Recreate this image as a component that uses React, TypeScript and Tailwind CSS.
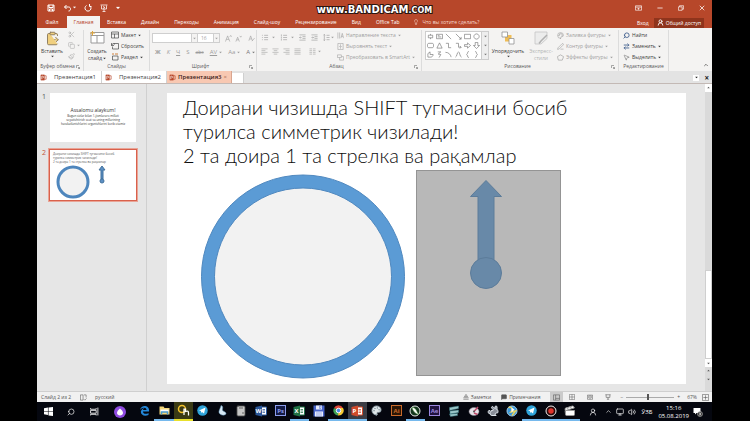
import type { ReactNode } from "react";
import clsx from "clsx";
import {
  ArrowRightLeft,
  Calculator,
  ChevronUp,
  Clapperboard,
  ClipboardPaste,
  Copy,
  Lightbulb,
  MessageSquare,
  MousePointer2,
  Palette,
  Paintbrush,
  PenLine,
  Rabbit,
  Scissors,
  Search,
  UserRound,
  Volume2,
  Monitor,
} from "lucide-react";

interface SvgProps {
  className?: string;
  box?: string;
  children: ReactNode;
}

const Svg = ({ className = "size-2", box = "0 0 16 16", children }: SvgProps) => (
  <svg viewBox={box} className={clsx("shrink-0", className)} fill="none" stroke="currentColor" aria-hidden="true">
    {children}
  </svg>
);

/* ---------- title bar ---------- */

const TitleBar = () => (
  <header className="relative flex h-[15px] items-center justify-between pl-[10px] pr-[7px] text-white">
    <div className="flex items-center gap-2">
      <button aria-label="Сохранить">
        <Svg>
          <path d="M2 2h12v12H2zM4 2v5h8V2M5 14v-4h6v4" strokeWidth="2" />
        </Svg>
      </button>
      <button aria-label="Отменить" className="flex items-center gap-px">
        <Svg className="h-2 w-[9px]">
          <path d="M6 2 2 6l4 4M2 6h8c3 0 4 2 4 4s-1 4-4 4" strokeWidth="2" />
        </Svg>
        <Svg className="size-[3px]">
          <path d="M1 4h14l-7 8z" fill="currentColor" />
        </Svg>
      </button>
      <button aria-label="Повторить">
        <Svg>
          <path d="M11 3a6 6 0 1 1-6 0M11 0v5h4" strokeWidth="2" />
        </Svg>
      </button>
      <button aria-label="С начала">
        <Svg>
          <path d="M1 2h14M3 3v7h10V3M8 10v5M5 15h6M6 5l4 2-4 2" strokeWidth="1.5" />
        </Svg>
      </button>
      <button aria-label="Настройка панели">
        <Svg className="size-[4px]">
          <path d="M1 4h14l-7 8z" fill="currentColor" />
        </Svg>
      </button>
    </div>
    <p className="absolute inset-x-0 top-[3px] text-center font-['DejaVu_Sans'] text-[10px] leading-[13px] font-bold text-white [paint-order:stroke] [-webkit-text-stroke:2px_#2b1510]">
      www.BANDICAM<span className="text-[8px]">.COM</span>
    </p>
    <div className="flex items-center gap-[15px]">
      <button aria-label="Параметры ленты">
        <Svg className="h-2 w-[7px]">
          <path d="M1 3h14v10H1zM1 6h14M8 12V8M6 10l2-2 2 2" strokeWidth="1.5" />
        </Svg>
      </button>
      <button aria-label="Свернуть">
        <Svg className="h-2 w-[6px]">
          <path d="M1 8h14" strokeWidth="2" />
        </Svg>
      </button>
      <button aria-label="Развернуть">
        <Svg className="h-2 w-[6px]">
          <path d="M1 5h10v9H1zM4 5V2h11v9h-4" strokeWidth="1.8" />
        </Svg>
      </button>
      <button aria-label="Закрыть">
        <Svg className="h-2 w-[6px]">
          <path d="m2 2 12 12M14 2 2 14" strokeWidth="2" />
        </Svg>
      </button>
    </div>
  </header>
);

const menu = [
  "Вставка",
  "Дизайн",
  "Переходы",
  "Анимация",
  "Слайд-шоу",
  "Рецензирование",
  "Вид",
  "Office Tab",
];

const RibbonTabs = () => (
  <nav className="flex h-[13px] items-end justify-between pr-2 text-[5px] text-white">
    <div className="flex h-3 items-center">
      <button className="w-[30px] text-center">Файл</button>
      <button className="h-3 w-[33px] bg-[#f4f3f2] text-center text-[#b7472a]">Главная</button>
      <div className="flex gap-[15px] pl-[7px]">
        {menu.map((item) => (
          <button key={item}>{item}</button>
        ))}
      </div>
      <button className="flex items-center gap-1 pl-[13px] text-[#f6d9cf]">
        <Lightbulb className="size-[6px]" />
        Что вы хотите сделать?
      </button>
    </div>
    <div className="flex h-[11px] items-center gap-[5px]">
      <button>Вход</button>
      <button className="flex h-[10px] items-center gap-[2px] bg-[#8f341c] px-[3px]">
        <UserRound className="size-[7px]" strokeWidth={3} />
        Общий доступ
      </button>
    </div>
  </nav>
);

/* ---------- ribbon ---------- */

interface GroupProps {
  label: string;
  className: string;
  launcher?: boolean;
  children: ReactNode;
}

const Group = ({ label, className, launcher, children }: GroupProps) => (
  <section className={clsx("flex shrink-0 flex-col border-r border-[#dcdcdc]", className)}>
    <div className="flex-1">{children}</div>
    <div className={clsx("relative h-[9px] text-center leading-[8px] text-[#5a5a5a]", launcher && "pr-[5px]")}>
      {label}
      {launcher && (
        <button aria-label={`Параметры: ${label}`} className="absolute right-[3px] bottom-[2px]">
          <Svg className="size-[4px]">
            <path d="M2 12V2h10M8 8l6 6M14 8v6H8" strokeWidth="2" />
          </Svg>
        </button>
      )}
    </div>
  </section>
);

const Caret = () => (
  <Svg className="size-[3px]">
    <path d="M1 4h14l-7 8z" fill="currentColor" stroke="none" />
  </Svg>
);

const ClipboardGroup = () => (
  <Group label="Буфер обмена" className="w-[47px]" launcher>
    <div className="flex gap-[5px] pt-px pl-[4px] text-[#3c3c3c]">
      <button className="flex w-[22px] flex-col items-center">
        <ClipboardPaste className="mb-[2px] size-[15px] fill-[#f0cf7e] text-[#8b7a5c]" strokeWidth={1.5} />
        <span className="leading-[7px]">Вставить</span>
        <Caret />
      </button>
      <div className="flex flex-col gap-[4px] text-[#b0b0b0]">
        <button aria-label="Вырезать">
          <Scissors className="size-[7px]" />
        </button>
        <button aria-label="Копировать" className="flex items-center gap-[2px]">
          <Copy className="size-[7px]" />
          <Caret />
        </button>
        <button aria-label="Формат по образцу">
          <Paintbrush className="size-[7px]" />
        </button>
      </div>
    </div>
  </Group>
);

const SlidesGroup = () => (
  <Group label="Слайды" className="w-[66px]">
    <div className="flex gap-[4px] pt-px pl-[3px] text-[#3c3c3c]">
      <button className="flex w-[20px] flex-col items-center leading-[7px]">
        <Svg className="mb-[4px] h-[13px] w-[15px]" box="0 0 30 26">
          <path d="M2 3h26v21H2z" fill="#fff" stroke="#9a9a9a" strokeWidth="2" />
          <path d="M2 9h26M14 9v15" stroke="#9a9a9a" strokeWidth="2" />
          <path d="M5 0v9M0 4h10" stroke="#e0a63c" strokeWidth="2" />
        </Svg>
        <span>Создать</span>
        <span className="flex items-center gap-px">
          слайд
          <Caret />
        </span>
      </button>
      <div className="flex flex-col gap-[3px] leading-[8px]">
        <button className="flex items-center gap-[2px]">
          <Svg>
            <path d="M1 2h14v12H1zM1 6h14M7 6v8" strokeWidth="1.3" />
          </Svg>
          Макет
          <Caret />
        </button>
        <button className="flex items-center gap-[2px]">
          <Svg>
            <path d="M5 3h10v11H3V9M1 2v5h5M1 7c1-4 5-5 7-2" strokeWidth="1.3" />
          </Svg>
          Сбросить
        </button>
        <button className="flex items-center gap-[2px]">
          <Svg>
            <path d="M3 6h11v8H3z" strokeWidth="1.3" />
            <path d="M2 2h4M8 2h6" stroke="#d0803a" strokeWidth="2" />
          </Svg>
          Раздел
          <Caret />
        </button>
      </div>
    </div>
  </Group>
);

const FontGroup = () => (
  <Group label="Шрифт" className="w-[107px]" launcher>
    <div className="flex items-center pt-[3px] pl-[2px] text-[#a3a3a3]">
      <input aria-label="Шрифт" className="h-[10px] w-[40px] border border-[#cfcfcf] bg-white" />
      <span className="flex h-[10px] w-[6px] items-center justify-center border border-l-0 border-[#cfcfcf]">
        <Caret />
      </span>
      <input
        aria-label="Размер шрифта"
        defaultValue="16"
        className="h-[10px] w-[16px] border border-l-0 border-[#cfcfcf] bg-white pl-[3px]"
      />
      <span className="flex h-[10px] w-[6px] items-center justify-center border border-l-0 border-[#cfcfcf]">
        <Caret />
      </span>
      <button aria-label="Увеличить шрифт" className="pl-[5px]">
        <Svg className="size-[7px]">
          <path d="M1 15 6 2l5 13M3 10h6M11 4l2-3 2 3" strokeWidth="1.5" />
        </Svg>
      </button>
      <button aria-label="Уменьшить шрифт" className="pl-[3px]">
        <Svg className="size-[7px]">
          <path d="M2 15 6 5l4 10M4 11h4M11 2l2 3 2-3" strokeWidth="1.5" />
        </Svg>
      </button>
      <button aria-label="Очистить формат" className="pl-[6px]">
        <Svg className="size-[7px]">
          <path d="M2 13 6 2l4 11M4 9h4M9 14l6-7" strokeWidth="1.5" />
        </Svg>
      </button>
    </div>
    <div className="flex items-center gap-[6px] pt-[5px] pl-[5px] text-[6px] leading-[8px] text-[#9c9c9c]">
      <button className="font-bold">Ж</button>
      <button className="italic">К</button>
      <button className="underline">Ч</button>
      <button>S</button>
      <button className="text-[5px] line-through">abc</button>
      <button className="flex items-center gap-[2px]">
        <span className="underline">AV</span>
        <Caret />
      </button>
      <button className="flex items-center gap-[2px]">
        Aa
        <Caret />
      </button>
      <button className="flex items-center gap-[2px] text-[#777]">
        A
        <Caret />
      </button>
    </div>
  </Group>
);

const lineIcons = [
  "M1 2h14M1 6h9M1 10h14M1 14h9",
  "M1 2h14M4 6h8M1 10h14M4 14h8",
  "M1 2h14M6 6h9M1 10h14M6 14h9",
  "M1 2h14M1 6h14M1 10h14M1 14h14",
];

const listIcons = ["M1 3h2M6 3h9M1 8h2M6 8h9M1 13h2M6 13h9", "M2 1v4M6 3h9M2 6v4M6 8h9M2 11v4M6 13h9"];
const indentIcons = ["M1 2h14M8 6h7M8 10h7M1 14h14M6 8H1M3 6 1 8l2 2", "M1 2h14M8 6h7M8 10h7M1 14h14M1 8h5M4 6l2 2-2 2"];

const ParagraphGroup = () => (
  <Group label="Абзац" className="w-[165px]" launcher>
    <div className="flex text-[#9f9f9f]">
      <div className="flex w-[80px] shrink-0 flex-col gap-[7px] pt-[4px] pl-[4px]">
        <div className="flex items-center gap-[5px]">
          {listIcons.map((d) => (
            <button key={d} aria-label="Список" className="flex items-center gap-[3px]">
              <Svg className="h-[7px] w-2">
                <path d={d} strokeWidth="1.5" />
              </Svg>
              <Caret />
            </button>
          ))}
          {indentIcons.map((d) => (
            <button key={d} aria-label="Отступ">
              <Svg className="size-[7px]">
                <path d={d} strokeWidth="1.5" />
              </Svg>
            </button>
          ))}
          <button aria-label="Интервал" className="flex items-center gap-px">
            <Svg className="size-[7px]">
              <path d="M3 1v14M1 3l2-2 2 2M1 13l2 2 2-2M8 3h7M8 8h7M8 13h7" strokeWidth="1.5" />
            </Svg>
            <Caret />
          </button>
        </div>
        <div className="flex items-center gap-[4px]">
          {lineIcons.map((d) => (
            <button key={d} aria-label="Выравнивание">
              <Svg className="size-[7px]">
                <path d={d} strokeWidth="1.3" />
              </Svg>
            </button>
          ))}
          <button aria-label="Колонки" className="flex items-center gap-[2px] pl-1">
            <Svg className="size-[7px]">
              <path d="M1 2h6M1 6h6M1 10h6M1 14h6M9 2h6M9 6h6M9 10h6M9 14h6" strokeWidth="1.3" />
            </Svg>
            <Caret />
          </button>
        </div>
      </div>
      <div className="flex flex-col gap-[3px] pt-px leading-[8px]">
        <button className="flex items-center gap-[2px]">
          <Svg className="size-[7px]">
            <path d="M2 1v14M6 1v14M9 14l3-11 3 11M10 10h4" strokeWidth="1.3" />
          </Svg>
          Направление текста
          <Caret />
        </button>
        <button className="flex items-center gap-[2px]">
          <Svg className="size-[7px]">
            <path d="M2 1h12v14H2zM8 3v4M8 9v4M5 8h6" strokeWidth="1.3" />
          </Svg>
          Выровнять текст
          <Caret />
        </button>
        <button className="flex items-center gap-[2px]">
          <Svg className="size-[7px]">
            <path d="M1 2h9v6H1zM6 8v6h9V6h-5" strokeWidth="1.3" />
          </Svg>
          Преобразовать в SmartArt
          <Caret />
        </button>
      </div>
    </div>
  </Group>
);

const shapes = [
  "M3 5h10v6H3zM8 2v3M8 11v3",
  "M1 3h14v10H1zM4 6h4M4 9h8",
  "M2 2l12 12",
  "M2 2l12 12M14 9v5H9",
  "M1 3h14v10H1z",
  "M8 2a6 6 0 1 0 .1 0z",
  "M3 3h10l2 2v6l-2 2H3l-2-2V5z",
  "M8 2l6 12H2z",
  "M2 3h6v10h6",
  "M2 3h6v9h6M11 9l3 3-3 3",
  "M1 6h7V2l7 6-7 6v-4H1z",
  "M5 1h6v7h4l-7 7-7-7h4z",
  "M2 14V6l5-4v6h7c0 4-3 6-6 6z",
  "M4 2h7L5 7l6 1-4 7",
  "M1 3c7 0 12 5 13 11",
  "M1 14C4 14 5 2 8 2s3 12 7 12",
  "M11 1C7 1 9 7 6 8c3 1 1 7 5 7",
  "M5 1c4 0 2 6 5 7-3 1-1 7-5 7",
];

const DrawingGroup = () => (
  <Group label="Рисование" className="w-[197px]" launcher>
    <div className="flex pt-px pl-[3px]">
      <div className="flex h-[29px] w-[64px] shrink-0 border border-[#cdcdcd] bg-white">
        <div className="grid flex-1 grid-cols-6 place-items-center text-[#6d6d6d]">
          {shapes.map((d) => (
            <button key={d} aria-label="Фигура">
              <Svg className="size-[7px]">
                <path d={d} strokeWidth="1.4" />
              </Svg>
            </button>
          ))}
        </div>
        <div className="flex w-[7px] flex-col items-center justify-around border-l border-[#cdcdcd] bg-[#eeeeee] text-[#777]">
          <Caret />
          <Caret />
          <Caret />
        </div>
      </div>
      <button className="ml-[2px] flex w-[34px] flex-col items-center leading-[7px] text-[#3c3c3c]">
        <Svg className="mb-[3px] size-[14px]" box="0 0 28 28">
          <path d="M8 8h13v13H8z" fill="#f0bd55" stroke="none" />
          <path d="M2 2h11v10H2zM16 15h10v11H16z" fill="#fff" stroke="#8c8c8c" strokeWidth="1.5" />
        </Svg>
        <span>Упорядочить</span>
        <Caret />
      </button>
      <button className="ml-[3px] flex w-[26px] flex-col items-center leading-[7px] text-[#b3b3b3]">
        <Svg className="mb-[3px] size-[14px]" box="0 0 28 28">
          <path d="M2 2h24v13l-12 11H2z" fill="#ececec" stroke="#c2c2c2" strokeWidth="1.5" />
          <path d="M26 8 14 20l-4 5" stroke="#b0b0b0" strokeWidth="3" />
        </Svg>
        <span>Экспресс-</span>
        <span>стили</span>
      </button>
      <div className="ml-[3px] flex flex-col gap-[3px] leading-[8px] text-[#9f9f9f]">
        <button className="flex items-center gap-[2px]">
          <Palette className="size-[7px]" />
          Заливка фигуры
          <Caret />
        </button>
        <button className="flex items-center gap-[2px]">
          <PenLine className="size-[7px]" />
          Контур фигуры
          <Caret />
        </button>
        <button className="flex items-center gap-[2px]">
          <Svg className="size-[7px]">
            <path d="M1 6 8 2l7 4-3 8H3z" strokeWidth="1.5" />
          </Svg>
          Эффекты фигуры
          <Caret />
        </button>
      </div>
    </div>
  </Group>
);

const EditingGroup = () => (
  <Group label="Редактирование" className="w-[50px]">
    <div className="flex flex-col gap-[3px] pt-px pl-[4px] leading-[8px] text-[#3c3c3c]">
      <button className="flex items-center gap-[2px]">
        <Search className="size-[7px] -scale-x-100 text-[#44618f]" strokeWidth={3} />
        Найти
      </button>
      <button className="flex items-center gap-[2px]">
        <ArrowRightLeft className="size-[7px] text-[#44618f]" strokeWidth={3} />
        Заменить
        <Caret />
      </button>
      <button className="flex items-center gap-[2px]">
        <MousePointer2 className="size-[7px] text-[#777]" />
        Выделить
        <Caret />
      </button>
    </div>
  </Group>
);

const Ribbon = () => (
  <div className="flex h-[43px] bg-[#f4f3f2] pt-[2px] text-[5px]">
    <ClipboardGroup />
    <SlidesGroup />
    <FontGroup />
    <ParagraphGroup />
    <DrawingGroup />
    <EditingGroup />
    <div className="flex flex-1 items-end justify-end p-[3px] text-[#555]">
      <button aria-label="Свернуть ленту">
        <ChevronUp className="size-[6px]" strokeWidth={3} />
      </button>
    </div>
  </div>
);

/* ---------- document tabs ---------- */

const PptIcon = () => (
  <Svg className="size-[7px]">
    <path d="M2 2h8v12H2z" fill="#b7472a" stroke="#b7472a" />
    <path d="M4 12V5h2c3 0 3 4 0 4" stroke="#fff" strokeWidth="1.5" />
    <path d="M10 4h4v8h-4" stroke="#b7472a" strokeWidth="1.5" />
  </Svg>
);

const docs = ["Презентация1", "Презентация2", "Презентация3"];

const DocTabs = () => (
  <div className="flex h-[13px] items-end border-b border-[#c3b9b5] bg-[#e3e3e3]">
    {docs.map((doc, i) => (
      <button
        key={doc}
        className={clsx(
          "flex h-3 w-[65px] shrink-0 items-center border-r",
          i === 2
            ? "gap-[2px] border-[#d9a58f] bg-[#f8c8b2] pl-[2px] font-semibold text-[#3a2018]"
            : "gap-[7px] border-[#d2d2d2] bg-white pl-[3px] text-[#444]",
        )}
      >
        <PptIcon />
        {doc}
        {i === 2 && <span className="font-normal text-[#b06a50]">×</span>}
      </button>
    ))}
    <button aria-label="Новая вкладка" className="h-[10px] w-[12px] border-r border-[#cfcfcf] bg-white" />
    <div className="flex flex-1 items-center justify-end gap-[5px] pr-[3px] text-[#222]">
      <button aria-label="Список вкладок" className="flex size-[6px] items-center justify-center bg-white">
        <Caret />
      </button>
      <button aria-label="Закрыть вкладку" className="text-[8px] leading-[11px] font-bold">
        ×
      </button>
    </div>
  </div>
);

/* ---------- workspace ---------- */

const Thumbnails = () => (
  <aside className="w-[110px] shrink-0 border-r border-[#d0d0d0] pt-[9px] pl-[5px] text-[#555]">
    <div className="flex gap-[4px]">
      <span className="w-[4px] text-[7px]">1</span>
      <button className="h-[49px] w-[86px] bg-white pb-1 text-center text-[#333]">
        <span className="block text-[5px] leading-[8px]">Assalomu alaykum!</span>
        <span className="block text-[3px] leading-[4px]">Bugun sizlar bilan 1-jismlararo millati</span>
        <span className="block text-[3px] leading-[4px]">soyutishtirish soat va uning millarining</span>
        <span className="block text-[3px] leading-[4px]">harakatlanishlarini organishlarini korib otamiz</span>
      </button>
    </div>
    <div className="flex gap-[3px] pt-[7px]">
      <span className="w-[4px] text-[7px] text-[#c0553b]">2</span>
      <button className="h-[52px] w-[88px] border border-[#d9614c] bg-white pl-[3px] text-left text-[#555] outline outline-[#e9a496]">
        <span className="block text-[3px] leading-[4px]">
          Доирани чизишда SHIFT тугмасини босиб
          <br />
          турилса симметрик чизилади!
          <br />2 та доира 1 та стрелка ва рақамлар
        </span>
        <svg viewBox="0 0 80 35" className="h-[35px] w-[80px]" aria-hidden="true">
          <circle cx="20" cy="18" r="15" fill="#f2f2f2" stroke="#4e86bd" strokeWidth="3" />
          <path d="M49 2l3 4h-2v9h-2V6h-2z" fill="#5b8fc4" stroke="#41719c" />
          <circle cx="49" cy="17" r="2" fill="#5b8fc4" stroke="#41719c" />
        </svg>
      </button>
    </div>
  </aside>
);

const Slide = () => (
  <main className="mt-[9px] mr-[19px] mb-[7px] ml-[20px] flex-1 bg-white pt-[2px]">
    <h1 className="pl-4 font-['Lato','Open_Sans',sans-serif] text-[20px] leading-[24px] font-light whitespace-nowrap text-[#0c0c0c]">
      Доирани чизишда SHIFT тугмасини босиб
      <br />
      турилса симметрик чизилади!
      <br />2 та доира 1 та стрелка ва рақамлар
    </h1>
    <svg viewBox="0 0 362 212" className="ml-[33px] h-[212px] w-[362px]" role="img" aria-label="Круг и стрелка">
      <circle cx="103" cy="109.5" r="101.5" fill="#5b9bd5" stroke="#4f88bf" />
      <circle cx="103" cy="109.5" r="88.5" fill="#f2f2f2" stroke="#4f88bf" />
      <rect x="216.500" y="3.500" width="144" height="205" fill="#b8b8b8" stroke="#949494" />
      <path d="M286 13.500l15.500 16H294V98h-16V29.500h-7.500z" fill="#6889a8" stroke="#5c7c9a" />
      <circle cx="286" cy="106" r="15.500" fill="#6889a8" stroke="#5c7c9a" />
    </svg>
  </main>
);

const ScrollBar = () => (
  <div className="flex w-[7px] flex-col items-center bg-[#dadada] text-[#555]">
    <button aria-label="Вверх" className="flex h-2 w-full rotate-180 items-center justify-center bg-white">
      <Caret />
    </button>
    <div className="flex-[179]" />
    <div className="w-full flex-[87] border border-[#cfcfcf] bg-white" />
    <button aria-label="Вниз" className="flex h-2 w-full items-center justify-center bg-white">
      <Caret />
    </button>
    <button aria-label="Предыдущий слайд" className="h-2 rotate-180">
      <Caret />
    </button>
    <button aria-label="Следующий слайд" className="h-2">
      <Caret />
    </button>
    <div className="h-[8px]" />
  </div>
);

const StatusBar = () => (
  <footer className="flex h-[11px] items-center border-t border-[#cfcfcf] bg-[#f1f1f1] pr-[3px] pl-[4px] text-[5px] text-[#555]">
    <span>Слайд 2 из 2</span>
    <Svg className="ml-[9px] size-[7px]">
      <path d="M1 2h6v12H1zM9 2h5v6M9 12l2 2 4-4" strokeWidth="1.3" />
    </Svg>
    <span className="pl-2">русский</span>
    <div className="ml-auto flex items-center gap-[10px]">
      <button className="flex items-center gap-[2px]">
        <Svg className="size-[6px]">
          <path d="M1 14h14M1 10h14M8 1l4 6H4z" strokeWidth="1.5" />
        </Svg>
        Заметки
      </button>
      <button className="flex items-center gap-[2px]">
        <MessageSquare className="size-[6px] fill-[#555]" />
        Примечания
      </button>
    </div>
    <div className="flex items-center pl-[10px]">
      <button aria-label="Обычный" className="flex h-[10px] w-[13px] items-center justify-center bg-[#cbcbcb]">
        <Svg className="size-[7px]">
          <path d="M1 2h14v12H1zM6 2v12M6 10h9" strokeWidth="1.3" />
        </Svg>
      </button>
      <button aria-label="Сортировщик" className="flex w-[18px] justify-center">
        <Svg className="size-[6px]">
          <path d="M1 1h14v14H1zM8 1v14M1 8h14" strokeWidth="1.3" />
        </Svg>
      </button>
      <button aria-label="Чтение" className="flex w-[18px] justify-center">
        <Svg className="size-[6px]">
          <path d="M8 3v11M8 3H1v11h14V3zM3 6h3M10 6h3M3 9h3M10 9h3" strokeWidth="1.5" />
        </Svg>
      </button>
      <button aria-label="Слайд-шоу" className="flex w-[18px] justify-center">
        <Svg className="size-[6px]">
          <path d="M1 2h14M3 2v7h10V2M8 9v5M5 14h6" strokeWidth="1.5" />
        </Svg>
      </button>
    </div>
    <button aria-label="Мельче" className="px-[3px]">−</button>
    <input
      type="range"
      aria-label="Масштаб"
      defaultValue={45}
      className="h-[6px] w-[48px] appearance-none bg-[linear-gradient(#aaa,#aaa)] bg-[length:100%_1px] bg-center bg-no-repeat [&::-webkit-slider-thumb]:h-[6px] [&::-webkit-slider-thumb]:w-[2px] [&::-webkit-slider-thumb]:appearance-none [&::-webkit-slider-thumb]:bg-[#555]"
    />
    <button aria-label="Крупнее" className="px-[3px]">+</button>
    <span className="pr-[5px] pl-[4px]">67%</span>
    <button aria-label="По размеру окна">
      <Svg className="size-[7px]">
        <path d="M1 1h14v14H1zM8 3v10M3 8h10" strokeWidth="1.3" />
      </Svg>
    </button>
  </footer>
);

/* ---------- taskbar ---------- */

const Letter = ({ text, fill, edge }: { text: string; fill: string; edge: string }) => (
  <Svg className="size-[11px]" box="0 0 22 22">
    <rect x="1" y="1" width="20" height="20" fill={fill} stroke={edge} strokeWidth="2" />
    <text x="11" y="16" textAnchor="middle" fontSize="12" fontWeight="700" fill={edge} stroke="none">
      {text}
    </text>
  </Svg>
);

const Office = ({ text, color }: { text: string; color: string }) => (
  <Svg className="size-[12px]" box="0 0 24 24">
    <path d="M12 4h11v16H12z" fill="#fff" stroke={color} strokeWidth="2" />
    <path d="M15 9h5M15 12h5M15 15h5" stroke={color} strokeWidth="1.5" />
    <path d="M1 4l13-3v22L1 20z" fill={color} stroke="none" />
    <text x="7" y="16" textAnchor="middle" fontSize="12" fontWeight="700" fill="#fff" stroke="none">
      {text}
    </text>
  </Svg>
);

const Telegram = () => (
  <Svg className="size-[11px]" box="0 0 22 22">
    <circle cx="11" cy="11" r="10.500" fill="#2fa3d9" stroke="none" />
    <path d="M4 11 17 5l-3 12-4-3-2 2v-4z" fill="#fff" stroke="none" />
  </Svg>
);

interface TaskApp {
  name: string;
  icon: ReactNode;
  open?: boolean;
  mark?: string;
}

const apps: TaskApp[] = [
  {
    name: "Edge",
    icon: (
      <Svg className="size-[11px]" box="0 0 22 22">
        <path d="M2 10C3 3 9 1 13 2c5 1 8 5 7 11H8c0 5 6 6 11 3v4C10 24 2 19 4 12c1-3 4-6 8-6-3 1-4 3-4 4h7c0-6-9-6-13 0z" fill="#2487d8" stroke="none" />
      </Svg>
    ),
  },
  {
    name: "Проводник",
    open: true,
    icon: (
      <Svg className="size-[11px]" box="0 0 22 22">
        <path d="M1 3h8l2 3h10v13H1z" fill="#f3d67a" stroke="none" />
        <path d="M3 9h16v5H3z" fill="#fff" stroke="none" />
        <path d="M5 19v-5h12v5" stroke="#4a9bd0" strokeWidth="3" />
      </Svg>
    ),
  },
  {
    name: "Office Tab",
    mark: "border-[#e8e02c] bg-[#3a3a14]",
    icon: (
      <Svg className="size-[13px]" box="0 0 26 26">
        <circle cx="10" cy="10" r="7" stroke="#f4c22c" strokeWidth="3" />
        <path d="M14 22V10h3v5c5-2 6 0 6 3v5" stroke="#fff" strokeWidth="2.500" />
      </Svg>
    ),
  },
  { name: "Telegram", icon: <Telegram /> },
  {
    name: "Утилита",
    icon: (
      <Svg className="size-[11px]" box="0 0 22 22">
        <path d="M8 1c5 1 3 6 3 9s7 3 7 7-9 5-13 0c-3-4 1-8 3-16z" fill="#d6e8f4" stroke="#5b8fb4" />
      </Svg>
    ),
  },
  { name: "Калькулятор", icon: <Calculator className="size-[12px] fill-[#e8e8e8] text-[#444]" /> },
  { name: "Word", icon: <Office text="W" color="#2b579a" /> },
  { name: "Photoshop", icon: <Letter text="Ps" fill="#141b45" edge="#8c9dec" /> },
  { name: "Excel", open: true, icon: <Office text="X" color="#217346" /> },
  {
    name: "Total Commander",
    icon: (
      <Svg className="size-[12px]" box="0 0 24 24">
        <path d="M1 1h22v22H1z" fill="#4864c8" stroke="none" />
        <path d="M6 1h12v8H6zM4 13h16v10H4z" fill="#e9edfb" stroke="none" />
        <path d="M13 2h3v5h-3zM6 16h12M6 20h12" stroke="#4864c8" />
      </Svg>
    ),
  },
  {
    name: "Chrome",
    open: true,
    icon: (
      <Svg className="size-[11px]" box="0 0 22 22">
        <path d="M11 11 2 6a10 10 0 0 1 18 0z" fill="#e04a3a" stroke="none" />
        <path d="M11 11 2 6a10 10 0 0 0 8 15z" fill="#3ea458" stroke="none" />
        <path d="M11 11l-1 10a10 10 0 0 0 10-15H11z" fill="#f6c934" stroke="none" />
        <circle cx="11" cy="11" r="4.500" fill="#4b8bea" stroke="#fff" strokeWidth="2" />
      </Svg>
    ),
  },
  { name: "PowerPoint", mark: "border-[#76b9ed] bg-[#3b3c44]", icon: <Office text="P" color="#d04a2b" /> },
  {
    name: "Paint",
    icon: <Palette className="size-[11px] fill-[#dfe7ea] text-[#8a9aa3]" />,
  },
  { name: "Illustrator", icon: <Letter text="Ai" fill="#2c1605" edge="#c96a2a" /> },
  {
    name: "CorelDRAW",
    open: true,
    icon: (
      <Svg className="size-[12px]" box="0 0 24 24">
        <circle cx="12" cy="12" r="10" fill="#14361d" stroke="#e4e9e4" strokeWidth="2" />
        <path d="M6 5c7 0 8 5 13 14C12 17 8 12 6 5z" fill="#fff" stroke="#58a54a" />
      </Svg>
    ),
  },
  { name: "After Effects", icon: <Letter text="Ae" fill="#20123f" edge="#9a86dd" /> },
  {
    name: "Диски",
    icon: (
      <Svg className="size-[12px]" box="0 0 24 24">
        <path d="M3 5 21 2v5L3 11zM4 12l17-2v5L4 18zM3 18l16-1v4L5 23z" fill="#9cc7c9" stroke="#35777f" />
      </Svg>
    ),
  },
  {
    name: "Запись дисков",
    icon: (
      <Svg className="size-[12px]" box="0 0 24 24">
        <ellipse cx="12" cy="13" rx="10" ry="8" fill="#e6e2e8" stroke="#8c8792" />
        <path d="M12 13 20 4M12 16l7 3" stroke="#c04a6a" strokeWidth="3" />
        <circle cx="12" cy="13" r="2" fill="#555" stroke="none" />
      </Svg>
    ),
  },
  {
    name: "Редактор",
    icon: <Rabbit className="size-[12px] fill-[#8a8f9a] text-[#dfe5ec]" />,
  },
  {
    name: "Загрузки",
    icon: (
      <Svg className="size-[12px]" box="0 0 24 24">
        <circle cx="12" cy="12" r="10" fill="#3c97da" stroke="#9fd0f2" strokeWidth="2" />
        <path d="M5 5c9-2 9 5 5 9l9-2-7 9" stroke="#e7d460" strokeWidth="3" />
        <path d="M11 5l6 4-6 6" fill="#fff" stroke="none" />
      </Svg>
    ),
  },
  { name: "Telegram Desktop", open: true, icon: <Telegram /> },
  {
    name: "Bandicam",
    open: true,
    icon: (
      <Svg className="size-[12px]" box="0 0 24 24">
        <circle cx="12" cy="12" r="10" fill="#2a0a0a" stroke="#eee" strokeWidth="2" />
        <circle cx="12" cy="12" r="5.500" fill="#e0342c" stroke="none" />
      </Svg>
    ),
  },
  { name: "Видео", open: true, icon: <Clapperboard className="size-[12px] fill-white text-[#999]" /> },
];

const TaskBar = () => (
  <nav className="flex h-[19px] items-center bg-[#05070f] text-white">
    <div className="flex w-[98px] items-center pl-[7px]">
      <button aria-label="Пуск" className="w-[23px]">
        <Svg className="size-[9px]">
          <path d="M0 2l7-1v6H0zM8 1l8-1v7H8zM0 8h7v6l-7-1zM8 8h8v8l-8-1z" fill="#fff" stroke="none" />
        </Svg>
      </button>
      <button aria-label="Поиск" className="w-[23px]">
        <Search className="size-[8px] -scale-x-100" />
      </button>
      <button aria-label="Представление задач" className="w-[24px]">
        <Svg className="size-[9px]">
          <path d="M1 2v2h10V2M1 6h10v5H1zM1 15v-2h10v2M14 1v14" strokeWidth="1.5" />
        </Svg>
      </button>
      <button aria-label="Алиса">
        <Svg className="size-[12px]" box="0 0 24 24">
          <circle cx="12" cy="12" r="12" fill="#8f4be0" stroke="none" />
          <path d="M12 5c4 3 6 6 6 9s-3 5-6 5-6-2-6-5 2-6 6-9z" fill="#fff" stroke="none" />
        </Svg>
      </button>
    </div>
    <div className="flex h-full flex-1">
      {apps.map(({ name, icon, open, mark }) => (
        <button
          key={name}
          aria-label={name}
          className={clsx(
            "flex h-full flex-1 items-center justify-center border-b-2",
            mark ?? (open ? "border-[#76b9ed]" : "border-transparent"),
          )}
        >
          {icon}
        </button>
      ))}
    </div>
    <div className="flex w-[132px] items-center justify-end gap-[4px] pr-[9px]">
      <button aria-label="Люди" className="pr-[4px]">
        <UserRound className="size-[8px]" />
      </button>
      <button aria-label="Скрытые значки">
        <ChevronUp className="size-[7px]" />
      </button>
      <Monitor className="size-[8px] shrink-0" />
      <Volume2 className="size-[8px] shrink-0" />
      <button className="px-[2px]">ЎЗБ</button>
      <time className="text-center leading-[8px]">
        15:16
        <br />
        05.08.2019
      </time>
      <button aria-label="Уведомления">
        <Svg className="size-[10px]" box="0 0 20 20">
          <path d="M1 2h14v10H7l-3 3v-3H1z" fill="#fff" stroke="none" />
          <circle cx="14" cy="14" r="5" fill="#333" stroke="#ddd" />
          <path d="M12 12h3v4h-3M12 14h3" stroke="#fff" />
        </Svg>
      </button>
    </div>
  </nav>
);

const App = () => {
  return (
    <div className="flex min-h-screen flex-col bg-black pr-[38px] pl-[37px] font-['Open_Sans','Noto_Sans',sans-serif] text-[6px] leading-[8px] whitespace-nowrap">
      <div className="bg-[#b7472a]">
        <TitleBar />
        <RibbonTabs />
      </div>
      <Ribbon />
      <DocTabs />
      <div className="flex flex-1 bg-[#e6e6e6]">
        <Thumbnails />
        <Slide />
        <ScrollBar />
      </div>
      <StatusBar />
      <TaskBar />
    </div>
  );
};

export default App;
